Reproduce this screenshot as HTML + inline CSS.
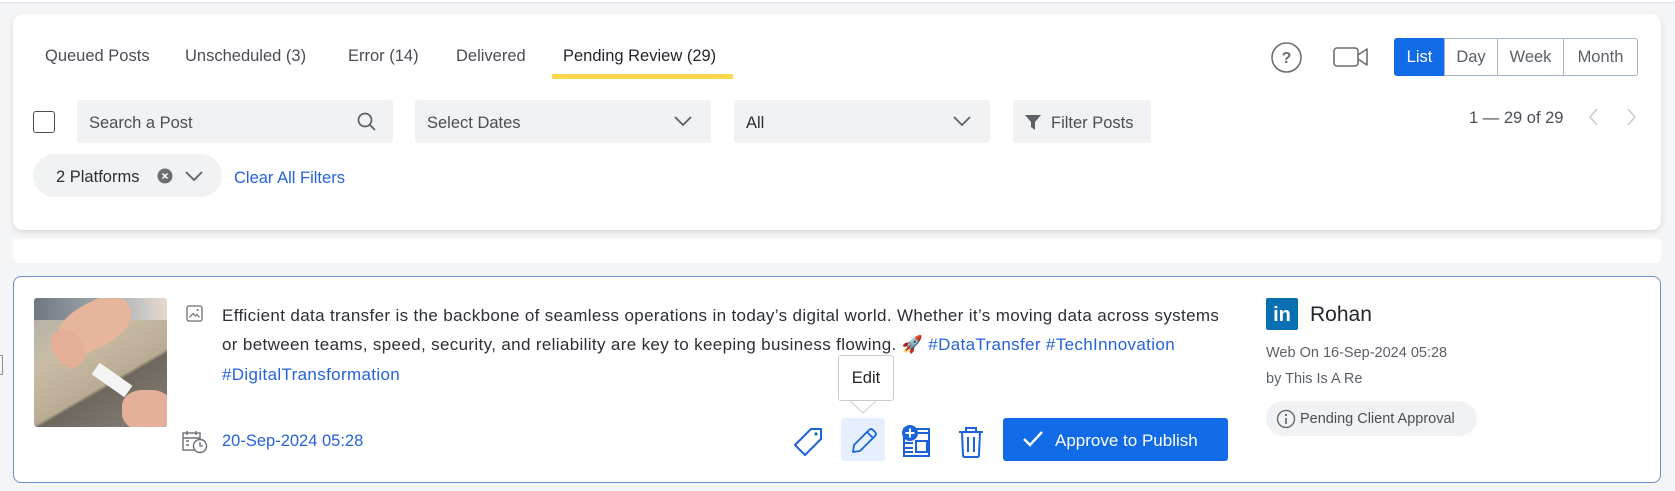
<!DOCTYPE html>
<html><head><meta charset="utf-8"><style>
*{margin:0;padding:0;box-sizing:border-box}
body{width:1675px;height:491px;background:#f4f5f7;font-family:"Liberation Sans",sans-serif;position:relative;overflow:hidden;color:#2b2f36}
.a{position:absolute;white-space:nowrap}
.box{position:absolute;background:#f0f2f4;border-radius:3px;font-size:16.5px;color:#4a4f57;display:flex;align-items:center}
.tab{position:absolute;top:47px;font-size:16.5px;color:#494e56}
.seg{position:absolute;top:38px;height:38px;border:1px solid #a7b4c4;display:flex;align-items:center;justify-content:center;font-size:16.5px;color:#5b6168;background:#fff}
</style></head><body>
<div class="a" style="left:0;top:0;width:1675px;height:3px;background:#fff;border-bottom:1px solid #dcdfe3"></div>
<div class="a" style="left:13px;top:14px;width:1648px;height:216px;background:#fff;border-radius:10px;box-shadow:0 2px 6px rgba(0,0,0,.12)"></div>
<div class="tab" style="left:45px">Queued Posts</div>
<div class="tab" style="left:185px">Unscheduled (3)</div>
<div class="tab" style="left:348px">Error (14)</div>
<div class="tab" style="left:456px">Delivered</div>
<div class="tab" style="left:563px;color:#22262c">Pending Review (29)</div>
<div class="a" style="left:552px;top:74px;width:181px;height:5px;background:#fdd84c"></div>
<svg class="a" style="left:1270px;top:41px" width="33" height="33"><circle cx="16.5" cy="16.5" r="14.5" fill="none" stroke="#6a6f76" stroke-width="1.6"/><text x="16.5" y="22" text-anchor="middle" font-family="Liberation Sans" font-size="16" font-weight="bold" fill="#6a6f76">?</text></svg>
<svg class="a" style="left:1333px;top:46px" width="36" height="22"><rect x="1" y="2" width="24" height="18" rx="3" fill="none" stroke="#6a6f76" stroke-width="1.6"/><path d="M25 9 L34 3 V19 L25 13" fill="none" stroke="#6a6f76" stroke-width="1.6" stroke-linejoin="round"/></svg>
<div class="seg" style="left:1394px;width:51px;background:#116ae6;border-color:#116ae6;color:#fff;border-radius:3px 0 0 3px">List</div>
<div class="seg" style="left:1444px;width:54px">Day</div>
<div class="seg" style="left:1497px;width:67px">Week</div>
<div class="seg" style="left:1563px;width:75px;border-radius:0 3px 3px 0">Month</div>
<div class="a" style="left:33px;top:111px;width:22px;height:22px;border:1.5px solid #4a4f57;border-radius:3px;background:#fff"></div>
<div class="box" style="left:77px;top:100px;width:316px;height:43px;padding-left:12px;padding-top:3px">Search a Post
<svg class="a" style="left:280px;top:12px" width="20" height="20"><circle cx="8" cy="8" r="6.5" fill="none" stroke="#5b6168" stroke-width="1.7"/><path d="M13 13 L18 18" stroke="#5b6168" stroke-width="1.8"/></svg></div>
<div class="box" style="left:415px;top:100px;width:296px;height:43px;padding-left:12px;padding-top:3px">Select Dates
<svg class="a" style="left:259px;top:15px" width="18" height="12"><path d="M1 2 L9 10 L17 2" fill="none" stroke="#5b6168" stroke-width="1.8"/></svg></div>
<div class="box" style="left:734px;top:100px;width:256px;height:43px;padding-left:12px;padding-top:3px;color:#2b2f36">All
<svg class="a" style="left:219px;top:15px" width="18" height="12"><path d="M1 2 L9 10 L17 2" fill="none" stroke="#5b6168" stroke-width="1.8"/></svg></div>
<div class="box" style="left:1013px;top:100px;width:138px;height:43px;padding-left:38px;padding-top:3px">Filter Posts
<svg class="a" style="left:11px;top:14px" width="18" height="17"><path d="M1 1 H17 L11 8 V16 L7 13 V8 Z" fill="#5b6168"/></svg></div>
<div class="a" style="left:1469px;top:109px;font-size:16.5px;color:#4a4f57">1 — 29 of 29</div>
<svg class="a" style="left:1585px;top:106px" width="55" height="22"><path d="M12 3 L5 11 L12 19 M43 3 L50 11 L43 19" fill="none" stroke="#c9ccd0" stroke-width="1.6"/></svg>
<div class="box" style="left:33px;top:154px;width:189px;height:43px;border-radius:22px;padding-left:23px;padding-top:3px;color:#2b2f36">2 Platforms
<svg class="a" style="left:124px;top:14px" width="16" height="16"><circle cx="8" cy="8" r="7.5" fill="#6a6f76"/><path d="M5.5 5.5 L10.5 10.5 M10.5 5.5 L5.5 10.5" stroke="#fff" stroke-width="1.5"/></svg>
<svg class="a" style="left:152px;top:16px" width="18" height="12"><path d="M1 2 L9 10 L17 2" fill="none" stroke="#5b6168" stroke-width="1.8"/></svg></div>
<div class="a" style="left:234px;top:169px;font-size:16.5px;color:#2563dc">Clear All Filters</div>
<div class="a" style="left:13px;top:239px;width:1648px;height:24px;background:#fff;border-radius:0 0 6px 6px"></div>
<div class="a" style="left:0;top:355px;width:3px;height:20px;border:1px solid #8a8f96;border-left:none"></div>
<div class="a" style="left:13px;top:276px;width:1648px;height:207px;background:#fff;border:1px solid #6d8fcd;border-radius:8px"></div>
<div class="a" style="left:34px;top:298px;width:133px;height:129px;border-radius:3px;overflow:hidden;background:linear-gradient(150deg,#9aa0a4 0,#b9b4a8 14%,#c9bca5 35%,#b9ab93 62%,#6e675d 64%,#87837c 100%)">
<div class="a" style="left:0;top:0;width:133px;height:22px;background:linear-gradient(90deg,#6f7780,#a9b0b6 60%,#e6d9ce)"></div>
<div class="a" style="left:20px;top:5px;width:80px;height:45px;border-radius:45%;background:#e7b59b;transform:rotate(-30deg)"></div>
<div class="a" style="left:14px;top:35px;width:40px;height:30px;border-radius:45%;background:#e4af96;transform:rotate(60deg)"></div>
<div class="a" style="left:58px;top:75px;width:40px;height:14px;background:#f4f4f4;transform:rotate(35deg)"></div>
<div class="a" style="left:88px;top:92px;width:50px;height:40px;border-radius:40%;background:#e4b09a"></div>
</div>
<svg class="a" style="left:186px;top:305px" width="17" height="17"><rect x="1" y="1" width="15" height="15" rx="2" fill="none" stroke="#6a6f76" stroke-width="1.3"/><path d="M3.5 12.5 L7 8.5 L9.5 11 L11 9.5 L13.5 12.5" fill="none" stroke="#6a6f76" stroke-width="1.2"/><circle cx="11.5" cy="5" r="1" fill="#6a6f76"/></svg>
<div class="a" style="left:222px;top:301px;font-size:17px;line-height:29px;color:#2b2f36;letter-spacing:.35px">Efficient data transfer is the backbone of seamless operations in today’s digital world. Whether it’s moving data across systems<br>or between teams, speed, security, and reliability are key to keeping business flowing. <span style="font-family:'DejaVu Sans',sans-serif">🚀</span> <span style="color:#2563dc">#DataTransfer #TechInnovation</span><br><span style="color:#2563dc">#DigitalTransformation</span></div>
<svg class="a" style="left:182px;top:430px" width="26" height="24"><rect x="1" y="3" width="17" height="17" fill="none" stroke="#6a6f76" stroke-width="1.4"/><path d="M1 8 H18 M5 1 V5 M14 1 V5 M4 11 H7 M4 15 H7" stroke="#6a6f76" stroke-width="1.4"/><circle cx="18" cy="16" r="6.5" fill="#fff" stroke="#6a6f76" stroke-width="1.4"/><path d="M18 12 V16 H21" fill="none" stroke="#6a6f76" stroke-width="1.3"/></svg>
<div class="a" style="left:222px;top:432px;font-size:16.5px;color:#2563dc">20-Sep-2024 05:28</div>
<svg class="a" style="left:793px;top:426px" width="32" height="32"><path d="M18 3 H28 V13 L12 29 L2 19 Z" fill="none" stroke="#1a63dc" stroke-width="2" stroke-linejoin="round"/><circle cx="23" cy="8" r="1.6" fill="#1a63dc"/></svg>
<div class="a" style="left:841px;top:418px;width:44px;height:43px;background:#e5effd;border-radius:3px"></div>
<svg class="a" style="left:849px;top:426px" width="30" height="30"><path d="M4 26 L5 19 L20 4 Q22 2 24 4 L26 6 Q28 8 26 10 L11 25 Z M18 6 L24 12" fill="none" stroke="#1a63dc" stroke-width="1.8" stroke-linejoin="round"/></svg>
<div class="a" style="left:838px;top:355px;width:56px;height:46px;background:#fff;border:1px solid #c8ccd2;border-radius:3px;font-size:16.5px;color:#222;display:flex;align-items:center;justify-content:center">Edit</div>
<svg class="a" style="left:850px;top:400px" width="26" height="14"><path d="M0 1 L13 13 L26 1" fill="#fff" stroke="#c8ccd2" stroke-width="1"/></svg>
<svg class="a" style="left:901px;top:424px" width="32" height="34"><rect x="3" y="5" width="25" height="27" fill="none" stroke="#1a63dc" stroke-width="2"/><path d="M13 9 H28 M3 19 H12 M3 24 H12 M3 28 H12" stroke="#1a63dc" stroke-width="2"/><rect x="15" y="17" width="11" height="11" fill="none" stroke="#1a63dc" stroke-width="2"/><circle cx="9" cy="9" r="8" fill="#1a63dc"/><path d="M9 4.5 V13.5 M4.5 9 H13.5" stroke="#fff" stroke-width="2"/></svg>
<svg class="a" style="left:958px;top:425px" width="26" height="34"><path d="M1 7 H25 M8 7 V3 H18 V7 M4 7 L5 30 Q5 32 7 32 H19 Q21 32 21 30 L22 7 M10 12 V27 M16 12 V27" fill="none" stroke="#1a63dc" stroke-width="2"/></svg>
<div class="a" style="left:1003px;top:418px;width:225px;height:43px;background:#116ae6;border-radius:3px;color:#fff;font-size:17px;display:flex;align-items:center;padding-left:52px;padding-top:2px">Approve to Publish</div>
<svg class="a" style="left:1022px;top:430px" width="22" height="18"><path d="M2 9 L8 15 L20 2" fill="none" stroke="#fff" stroke-width="2.4"/></svg>
<div class="a" style="left:1266px;top:298px;width:32px;height:32px;background:#0a70b4;border-radius:2px;color:#fff;font-weight:bold;font-size:20px;text-align:center;line-height:34px">in</div>
<div class="a" style="left:1310px;top:303px;font-size:21px;color:#22262c">Rohan</div>
<div class="a" style="left:1266px;top:345px;font-size:14.5px;color:#5b6168">Web On 16-Sep-2024 05:28</div>
<div class="a" style="left:1266px;top:371px;font-size:14.5px;color:#5b6168">by This Is A Re</div>
<div class="a" style="left:1266px;top:401px;width:211px;height:35px;background:#f0f2f4;border-radius:18px;font-size:14.5px;color:#4a4f57;padding-left:34px;line-height:36px">Pending Client Approval</div>
<svg class="a" style="left:1276px;top:409px" width="20" height="20"><circle cx="10" cy="10" r="8.5" fill="none" stroke="#5b6168" stroke-width="1.3"/><circle cx="10" cy="6" r="1.1" fill="#5b6168"/><path d="M10 9 V15" stroke="#5b6168" stroke-width="1.6"/></svg>
</body></html>
